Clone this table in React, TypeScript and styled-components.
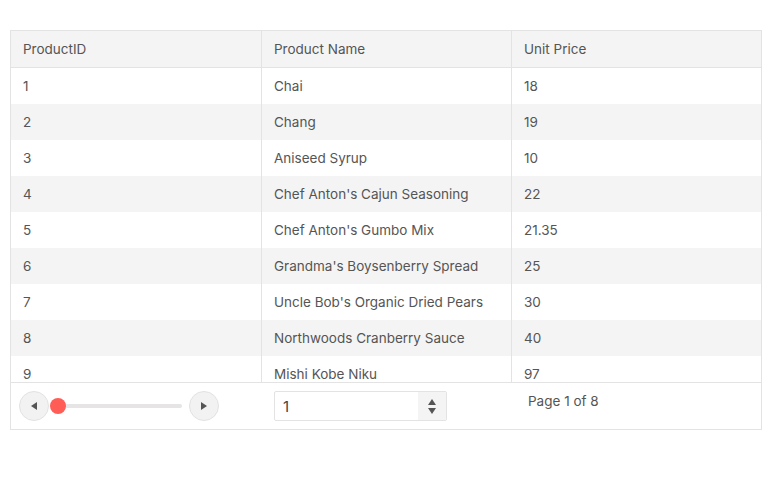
import React from 'react';
import styled, { createGlobalStyle } from 'styled-components';

const GlobalStyle = createGlobalStyle`
  * {
    box-sizing: border-box;
    margin: 0;
    padding: 0;
  }

  body {
    font-family: 'Inter', 'Liberation Sans', sans-serif;
    font-size: 13.5px;
    color: #555;
    background: #fff;
  }
`;

const Page = styled.div`
  padding: 30px 8px 0 10px;
`;

const Grid = styled.div`
  width: 752px;
  border: 1px solid #e3e3e3;
`;

const Row = styled.div<{ $striped?: boolean }>`
  display: grid;
  grid-template-columns: 250px 250px 250px;
  height: 36px;
  background: ${(p) => (p.$striped ? '#f4f4f4' : '#fff')};
`;

const HeaderRow = styled(Row)`
  height: 37px;
  background: #f4f4f4;
  border-bottom: 1px solid #e3e3e3;
`;

const Cell = styled.div`
  display: flex;
  align-items: center;
  padding: 0 12px 1px;
  white-space: nowrap;
  border-left: 1px solid #e3e3e3;

  &:first-child {
    border-left: none;
  }
`;

const Body = styled.div`
  height: 314px;
  overflow: hidden;
`;

const Footer = styled.div`
  display: grid;
  grid-template-columns: 250px 250px 250px;
  height: 47px;
  border-top: 1px solid #e3e3e3;
  align-items: center;
`;

const SliderBox = styled.div`
  display: flex;
  align-items: center;
  padding-left: 8px;
  gap: 2px;
`;

const RoundButton = styled.button`
  width: 30px;
  height: 30px;
  border-radius: 50%;
  border: 1px solid #e2e2e2;
  background: #f2f2f2;
  display: flex;
  align-items: center;
  justify-content: center;
  color: #444;
  cursor: pointer;
`;

const Track = styled.div`
  position: relative;
  width: 131px;
  height: 4px;
  margin-right: 5px;
  border-radius: 2px;
  background: #e6e4e4;
`;

const Thumb = styled.div`
  position: absolute;
  top: -6px;
  left: -1px;
  width: 16px;
  height: 16px;
  border-radius: 50%;
  background: #ff5d55;
`;

const InputBox = styled.div`
  display: flex;
  width: 173px;
  height: 30px;
  margin-left: 13px;
  border: 1px solid #e3e3e3;
  border-radius: 2px;
  overflow: hidden;
`;

const NumberText = styled.div`
  flex: 1;
  display: flex;
  align-items: center;
  padding-left: 8px;
  font-size: 15px;
  color: #444;
`;

const Spinner = styled.div`
  width: 28px;
  background: #f4f4f4;
  display: flex;
  flex-direction: column;
  align-items: center;
  justify-content: center;
  gap: 3px;
`;

const PageInfo = styled.div`
  padding-left: 17px;
  margin-top: -11px;
  color: #555;
`;

const Tri = ({ dir }: { dir: 'left' | 'right' | 'up' | 'down' }) => {
  const pts = {
    left: '6,0 6,8 0,4',
    right: '0,0 0,8 6,4',
    up: '0,6 8,6 4,0',
    down: '0,0 8,0 4,6',
  }[dir];
  const w = dir === 'left' || dir === 'right' ? 6 : 8;
  const h = dir === 'left' || dir === 'right' ? 8 : 6;
  return (
    <svg width={w} height={h} viewBox={`0 0 ${w} ${h}`}>
      <polygon points={pts} fill="#555" />
    </svg>
  );
};

const products = [
  [1, 'Chai', '18'],
  [2, 'Chang', '19'],
  [3, 'Aniseed Syrup', '10'],
  [4, "Chef Anton's Cajun Seasoning", '22'],
  [5, "Chef Anton's Gumbo Mix", '21.35'],
  [6, "Grandma's Boysenberry Spread", '25'],
  [7, "Uncle Bob's Organic Dried Pears", '30'],
  [8, 'Northwoods Cranberry Sauce', '40'],
  [9, 'Mishi Kobe Niku', '97'],
];

export default function App() {
  return (
    <>
      <GlobalStyle />
      <Page>
        <Grid>
          <HeaderRow>
            <Cell>ProductID</Cell>
            <Cell>Product Name</Cell>
            <Cell>Unit Price</Cell>
          </HeaderRow>
          <Body>
            {products.map(([id, name, price], i) => (
              <Row key={id} $striped={i % 2 === 1}>
                <Cell>{id}</Cell>
                <Cell>{name}</Cell>
                <Cell>{price}</Cell>
              </Row>
            ))}
          </Body>
          <Footer>
            <SliderBox>
              <RoundButton>
                <Tri dir="left" />
              </RoundButton>
              <Track>
                <Thumb />
              </Track>
              <RoundButton>
                <Tri dir="right" />
              </RoundButton>
            </SliderBox>
            <InputBox>
              <NumberText>1</NumberText>
              <Spinner>
                <Tri dir="up" />
                <Tri dir="down" />
              </Spinner>
            </InputBox>
            <PageInfo>Page 1 of 8</PageInfo>
          </Footer>
        </Grid>
      </Page>
    </>
  );
}
